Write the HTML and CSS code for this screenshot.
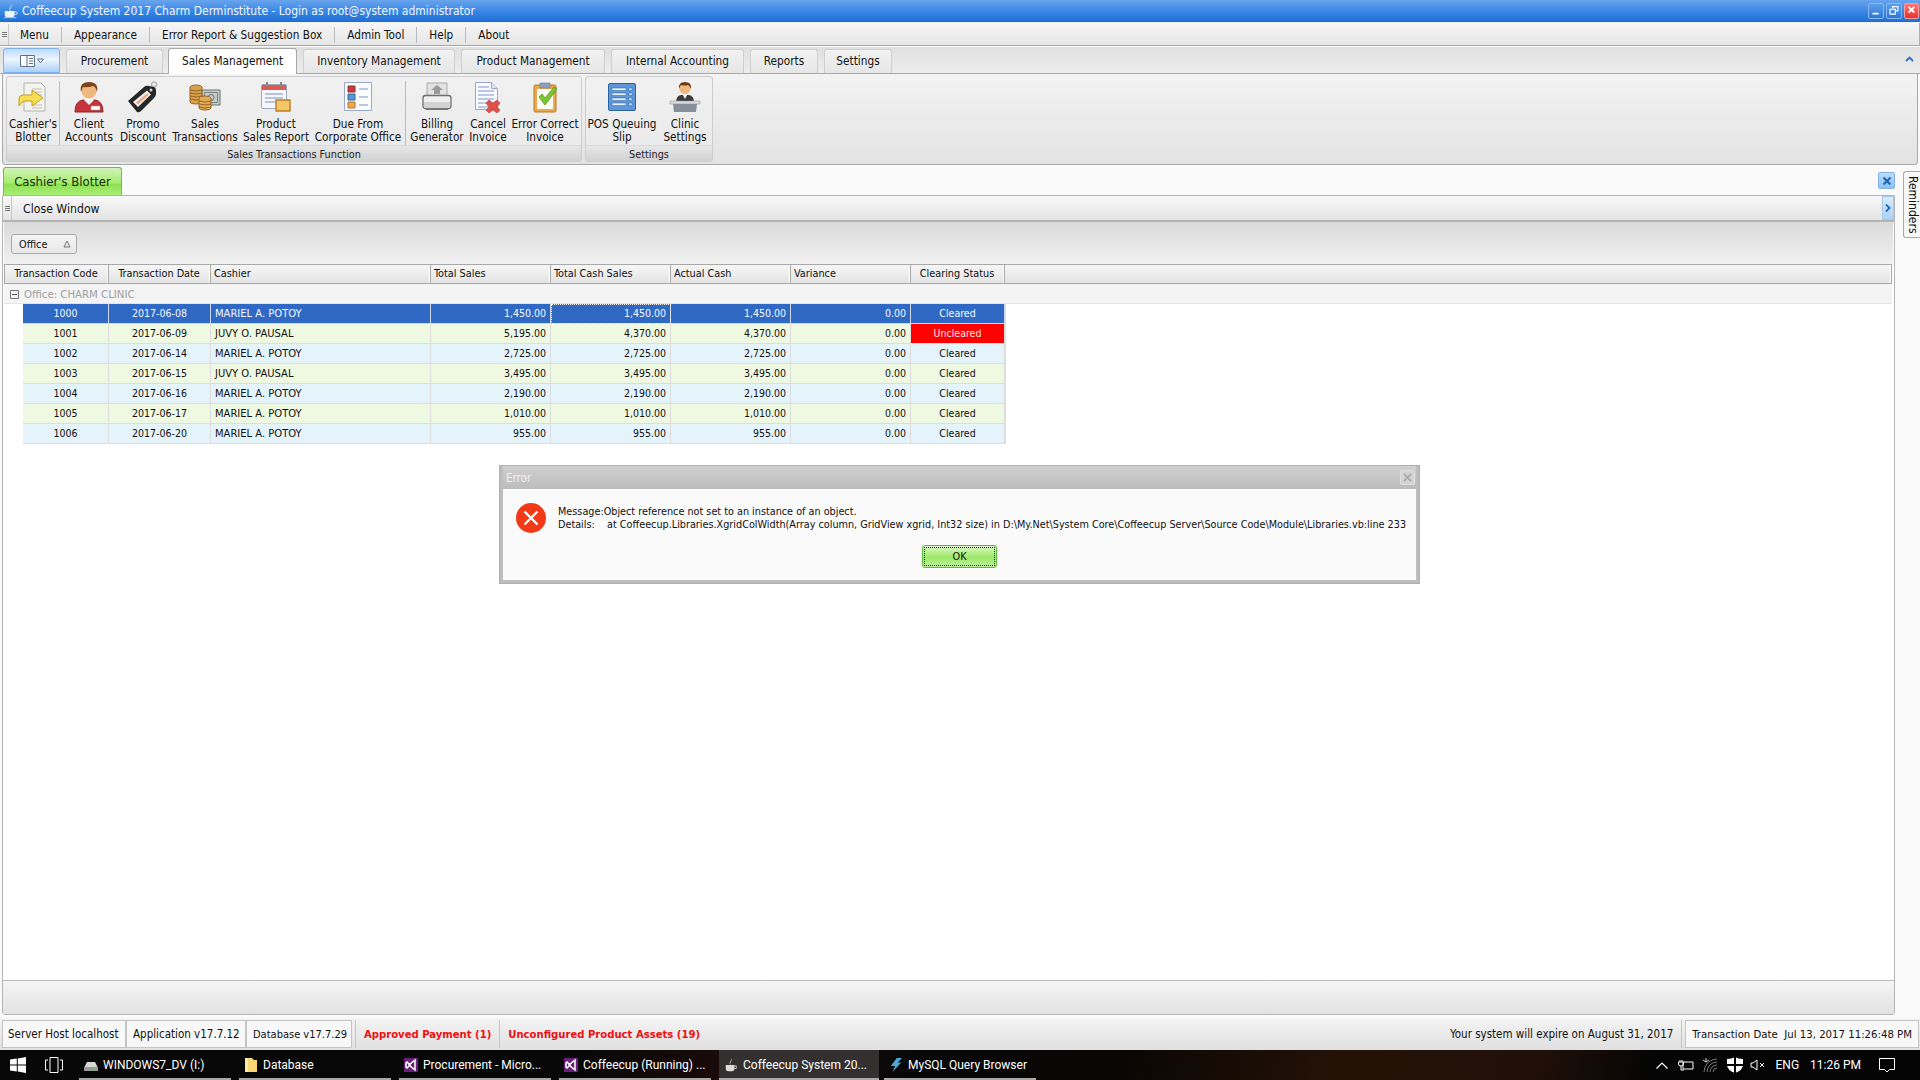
FILE: index.html
```html
<!DOCTYPE html>
<html lang="en">
<head>
    <meta charset="UTF-8">
    <title>Coffeecup System 2017 Charm Derminstitute</title>
    <link rel="stylesheet" href="styles.css">
</head>
<body>
<div class="window">

    <!-- title bar -->
    <div class="titlebar">
        <svg class="title-icon" viewBox="0 0 18 18"><path d="M9 1q2 2 0 4t0 4q-3-2-1-4t1-4z" fill="#dfe9f5"/><path d="M2 9h11v4q0 3-3 3H5q-3 0-3-3z" fill="#eef3fa"/><path d="M13 10h2q1 0 1 1.500T14 13h-1" fill="none" stroke="#eef3fa"/><path d="M1 16.500h14" stroke="#c4d6ee"/></svg>
        <span class="title-text">Coffeecup System 2017 Charm Derminstitute - Login as root@system administrator</span>
        <div class="win-buttons">
            <span class="win-btn"><svg viewBox="0 0 16 15"><path d="M4 10h7v2H4z" fill="#fff"/></svg></span>
            <span class="win-btn"><svg viewBox="0 0 16 15"><path d="M6.500 5V3h6v5H10M3.500 6h6v5.500h-6z" fill="none" stroke="#fff" stroke-width="1.300"/></svg></span>
            <span class="win-btn win-close"><svg viewBox="0 0 16 15"><path d="M4.500 3.500l7 7M11.500 3.500l-7 7" stroke="#fff" stroke-width="2.400"/></svg></span>
        </div>
    </div>

    <!-- menu -->
    <div class="menubar">
        <span class="grip"></span>
        <span class="menu-item">Menu</span>
        <span class="menu-item">Appearance</span>
        <span class="menu-item">Error Report &amp; Suggestion Box</span>
        <span class="menu-item">Admin Tool</span>
        <span class="menu-item">Help</span>
        <span class="menu-item no-sep">About</span>
    </div>

    <!-- ribbon tabs -->
    <div class="tabrow">
        <span class="app-btn">
            <svg viewBox="0 0 26 14"><path d="M1.500 1.500h14v11h-14zM8 1.500v11" fill="#fff" stroke="#5b7186"/><path d="M10 4.500h4M10 7h4M10 9.500h4" stroke="#5b7186"/><path d="M18.500 5h6l-3 4z" fill="#fff" stroke="#5b7186"/></svg>
        </span>
        <span class="tab t-proc">Procurement</span>
        <span class="tab tab-active t-sales">Sales Management</span>
        <span class="tab t-inv">Inventory Management</span>
        <span class="tab t-prod">Product Management</span>
        <span class="tab t-acct">Internal Accounting</span>
        <span class="tab t-rep">Reports</span>
        <span class="tab t-set">Settings</span>
        <svg class="collapse" viewBox="0 0 9 6"><path d="M1 5l3.500-3.500L8 5" fill="none" stroke="#2a72c8" stroke-width="1.800"/></svg>
    </div>

    <!-- ribbon -->
    <div class="ribbon">
        <div class="rb-group">
            <div class="rb-items rb-sales">
                <div class="rb-item">
                    <svg class="ico" viewBox="0 0 32 32"><path d="M7 2h17l4 4v24H7z" fill="#f5f5ef" stroke="#b4b4aa"/><path d="M15 8h10M15 11h10M15 14h10M15 24h10M15 27h10" stroke="#bdbdb2"/><path d="M2 25v-7q0-4 4-4h9v-5l11 8-11 8v-5H8q-3 0-6 5z" fill="#f8de55" stroke="#c49d1e"/></svg>
                    <span>Cashier's<br>Blotter</span>
                </div>
                <i class="rb-sep"></i>
                <div class="rb-item">
                    <svg class="ico" viewBox="0 0 32 32"><path d="M2 31q0-11 8-12h12q8 1 8 12z" fill="#c6353c" stroke="#8e2328"/><path d="M11 19l5 5 5-5-1-3h-8z" fill="#f2f2f2"/><circle cx="16" cy="10" r="7.500" fill="#f0b77e"/><path d="M8 11Q6 1 16 1t8 10q-1-5-4-6-6 2-10 1-1 2-2 5z" fill="#7d4418"/><path d="M18 25h9v4h-9z" fill="#fff" stroke="#999" stroke-width=".6"/></svg>
                    <span>Client<br>Accounts</span>
                </div>
                <div class="rb-item">
                    <svg class="ico" viewBox="0 0 32 32"><circle cx="27" cy="3.500" r="2.500" fill="none" stroke="#b5b5b5" stroke-width="1.400"/><path d="M1 20L17 6q2-2 5-1l5 1q2 1 2 3v4q0 2-2 4L14 30q-2 2-4 1z" fill="#262626"/><path d="M6 21L20 9.500l4 4L11 26z" fill="#eeeeee"/><path d="M9 21.500l11-9 1.500 1.500L11 23.500z" fill="#f2a878"/><circle cx="24" cy="9" r="1.500" fill="#ddd"/></svg>
                    <span>Promo<br>Discount</span>
                </div>
                <div class="rb-item">
                    <svg class="ico" viewBox="0 0 32 32"><path d="M13 9h18v15H13z" fill="#c6cdc8" stroke="#6c746f"/><path d="M15.500 11.500h13v10h-13z" fill="none" stroke="#7b837e"/><circle cx="22" cy="16.500" r="3" fill="none" stroke="#6c746f"/><path d="M1 6q0-2 6-2t6 2v15q0 2-6 2t-6-2z" fill="#d9a04a" stroke="#98672a"/><path d="M1 9q6 2 12 0M1 12q6 2 12 0M1 15q6 2 12 0M1 18q6 2 12 0" fill="none" stroke="#98672a"/><path d="M10 17q0-2 6-2t6 2v10q0 2-6 2t-6-2z" fill="#e2ab55" stroke="#98672a"/><path d="M10 20q6 2 12 0M10 23q6 2 12 0M10 26q6 2 12 0" fill="none" stroke="#98672a"/></svg>
                    <span>Sales<br>Transactions</span>
                </div>
                <div class="rb-item">
                    <svg class="ico" viewBox="0 0 32 32"><rect x="1.500" y="3.500" width="25" height="24" rx="1.500" fill="#f6f7fb" stroke="#9fa9bd"/><path d="M2 4h24v5H2z" fill="#dd5a50"/><path d="M7 1v5M21 1v5" stroke="#888" stroke-width="2"/><path d="M5 12h18v2H5zM5 16h18v2H5zM5 20h11v2H5z" fill="#b8c3d8"/><path d="M16 19h14v11H16z" fill="#f3c768" stroke="#bd7f1e" stroke-width="1.400"/></svg>
                    <span>Product<br>Sales Report</span>
                </div>
                <div class="rb-item">
                    <svg class="ico" viewBox="0 0 32 32"><path d="M2.500 1.500h27v28h-27z" fill="#fbfcff" stroke="#99a9c8"/><path d="M6 5h7v6H6z" fill="#c83c3c" stroke="#933"/><path d="M6 13h7v6H6z" fill="#5b96d6" stroke="#36679f"/><path d="M6 21h7v6H6z" fill="#eda94e" stroke="#b27722"/><path d="M17 8h9M17 16h9M17 24h9" stroke="#7f93bb" stroke-width="1.200"/></svg>
                    <span>Due From<br>Corporate Office</span>
                </div>
                <i class="rb-sep"></i>
                <div class="rb-item">
                    <svg class="ico" viewBox="0 0 32 32"><path d="M6 2h20v15H6z" fill="#e2e2e2" stroke="#aaa"/><path d="M16 4l6 5h-3v4h-6V9h-3z" fill="#9a9a9a"/><rect x="2" y="14.500" width="28" height="13" rx="2.500" fill="#f0f0f0" stroke="#6e6e6e" stroke-width="1.300"/><path d="M3 21h26v6H3z" fill="#d2d2d2"/><path d="M5 28h22" stroke="#777" stroke-width="2"/></svg>
                    <span>Billing<br>Generator</span>
                </div>
                <div class="rb-item">
                    <svg class="ico" viewBox="0 0 32 32"><path d="M3.500 1.500h16l6 6v21h-22z" fill="#f9faff" stroke="#98a8cc"/><path d="M19.500 1.500v6h6" fill="#dde5f5" stroke="#98a8cc"/><path d="M6 6h11M6 10h16M6 14h16M6 18h16M6 22h11M6 26h10" stroke="#7e94c6"/><path d="M17 19l4 3 4-3 3 3-3 4 3 3-3 3-4-3-4 3-3-3 3-3-3-4z" fill="#e0514b" stroke="#b6342f" stroke-width=".6"/></svg>
                    <span>Cancel<br>Invoice</span>
                </div>
                <div class="rb-item">
                    <svg class="ico" viewBox="0 0 32 32"><rect x="5" y="4" width="22" height="27" rx="1.500" fill="#eda84e" stroke="#b67722"/><path d="M8 8h16v20H8z" fill="#fdfdf8"/><path d="M11 2h10v5H11z" fill="#8da1be" stroke="#64789a" stroke-width=".6"/><path d="M10 16l3-3 3 4 9-11 3 2-12 16z" fill="#7cc62e" stroke="#4f8a17" stroke-width=".7"/></svg>
                    <span>Error Correct<br>Invoice</span>
                </div>
            </div>
            <div class="rb-caption">Sales Transactions Function</div>
        </div>
        <div class="rb-group">
            <div class="rb-items rb-settings">
                <div class="rb-item">
                    <svg class="ico" viewBox="0 0 32 32"><rect x="2.500" y="2.500" width="27" height="27" rx="1.500" fill="#5c97d8" stroke="#2d63a5"/><path d="M6 7h14v2.500H6zM6 12h14v2.500H6zM6 17h14v2.500H6zM6 22h14v2.500H6z" fill="#e8f0fb" stroke="#2d63a5" stroke-width=".5"/><path d="M23 7h3v2.500h-3zM23 12h3v2.500h-3zM23 17h3v2.500h-3zM23 22h3v2.500h-3z" fill="#dce9f8" stroke="#2d63a5" stroke-width=".5"/></svg>
                    <span>POS Queuing<br>Slip</span>
                </div>
                <div class="rb-item">
                    <svg class="ico" viewBox="0 0 32 32"><path d="M7 21q0-6 5-7h8q5 1 5 7z" fill="#3c3c40"/><path d="M14 14l2 4 2-4z" fill="#fff"/><circle cx="16" cy="7.500" r="5.500" fill="#efb87e"/><path d="M10 8Q9 1 16 1t6 7q-1-3-3-4-4 1-7 0-1 1-2 4z" fill="#6f3d14"/><path d="M1 20h30v3H1z" fill="#dcdcdc" stroke="#999" stroke-width=".6"/><path d="M4 23h24l-1 8H5z" fill="#85909c"/></svg>
                    <span>Clinic<br>Settings</span>
                </div>
            </div>
            <div class="rb-caption">Settings</div>
        </div>
    </div>

    <!-- document area -->
    <div class="doc-area">
        <div class="doc-main">
            <div class="doc-tabs">
                <span class="doc-tab">Cashier's Blotter</span>
                <span class="doc-close"><svg viewBox="0 0 10 10"><path d="M1.500 1.500l7 7M8.500 1.500l-7 7" stroke="#1f66b8" stroke-width="2.200"/></svg></span>
            </div>
            <div class="panel">
                <div class="toolbar">
                    <span class="grip"></span>
                    <span class="toolbar-item">Close Window</span>
                    <span class="toolbar-more"><svg viewBox="0 0 6 8"><path d="M1 .5L4.500 4 1 7.500" fill="none" stroke="#1f66b8" stroke-width="1.800"/></svg></span>
                </div>
                <div class="group-panel">
                    <span class="group-chip">Office<svg viewBox="0 0 8 8"><path d="M4 1l3 6H1z" fill="none" stroke="#777"/></svg></span>
                </div>
                <div class="grid">
                    <div class="grid-head">
                        <span class="center">Transaction Code</span>
                        <span class="center">Transaction Date</span>
                        <span>Cashier</span>
                        <span>Total Sales</span>
                        <span>Total Cash Sales</span>
                        <span>Actual Cash</span>
                        <span>Variance</span>
                        <span class="center">Clearing Status</span>
                        <span></span>
                    </div>
                    <div class="grid-group">
                        <svg viewBox="0 0 9 9"><path d="M.5.500h8v8h-8z" fill="#f4f4f4" stroke="#777"/><path d="M2 4.500h5" stroke="#555"/></svg>
                        Office: CHARM CLINIC
                    </div>
                    <div class="grid-row row-selected">
                        <span class="center">1000</span><span class="center">2017-06-08</span><span class="name">MARIEL A. POTOY</span><span class="num">1,450.00</span><span class="num cell-focus">1,450.00</span><span class="num">1,450.00</span><span class="num">0.00</span><span class="center">Cleared</span>
                    </div>
                    <div class="grid-row row-green">
                        <span class="center">1001</span><span class="center">2017-06-09</span><span class="name">JUVY O. PAUSAL</span><span class="num">5,195.00</span><span class="num">4,370.00</span><span class="num">4,370.00</span><span class="num">0.00</span><span class="center cell-red">Uncleared</span>
                    </div>
                    <div class="grid-row row-blue">
                        <span class="center">1002</span><span class="center">2017-06-14</span><span class="name">MARIEL A. POTOY</span><span class="num">2,725.00</span><span class="num">2,725.00</span><span class="num">2,725.00</span><span class="num">0.00</span><span class="center">Cleared</span>
                    </div>
                    <div class="grid-row row-green">
                        <span class="center">1003</span><span class="center">2017-06-15</span><span class="name">JUVY O. PAUSAL</span><span class="num">3,495.00</span><span class="num">3,495.00</span><span class="num">3,495.00</span><span class="num">0.00</span><span class="center">Cleared</span>
                    </div>
                    <div class="grid-row row-blue">
                        <span class="center">1004</span><span class="center">2017-06-16</span><span class="name">MARIEL A. POTOY</span><span class="num">2,190.00</span><span class="num">2,190.00</span><span class="num">2,190.00</span><span class="num">0.00</span><span class="center">Cleared</span>
                    </div>
                    <div class="grid-row row-green">
                        <span class="center">1005</span><span class="center">2017-06-17</span><span class="name">MARIEL A. POTOY</span><span class="num">1,010.00</span><span class="num">1,010.00</span><span class="num">1,010.00</span><span class="num">0.00</span><span class="center">Cleared</span>
                    </div>
                    <div class="grid-row row-blue">
                        <span class="center">1006</span><span class="center">2017-06-20</span><span class="name">MARIEL A. POTOY</span><span class="num">955.00</span><span class="num">955.00</span><span class="num">955.00</span><span class="num">0.00</span><span class="center">Cleared</span>
                    </div>
                </div>
                <div class="panel-foot"></div>
            </div>
        </div>
        <div class="side-tabs">
            <span class="side-tab">Reminders</span>
        </div>
    </div>

    <!-- status bar -->
    <div class="statusbar">
        <span class="st-cell st-host">Server Host localhost</span>
        <span class="st-cell st-app">Application v17.7.12</span>
        <span class="st-cell st-db">Database v17.7.29</span>
        <span class="st-alert">Approved Payment (1)</span>
        <span class="st-alert">Unconfigured Product Assets (19)</span>
        <span class="st-expire">Your system will expire on August 31, 2017</span>
        <span class="st-cell st-date">Transaction Date&nbsp; Jul 13, 2017 11:26:48 PM</span>
    </div>

    <!-- windows taskbar -->
    <div class="taskbar">
        <svg class="start" viewBox="0 0 16 16"><path d="M0 2.500L6.800 1.500v6H0zM7.800 1.400L16 0v7.500H7.800zM0 8.500h6.800v6L0 13.500zM7.800 8.500H16V16l-8.200-1.400z" fill="#fff"/></svg>
        <svg class="taskview" viewBox="0 0 18 16"><path d="M5 .5h8v15H5zM3 3H.5v10H3M15 3h2.500v10H15" fill="none" stroke="#fff"/></svg>
        <span class="task">
            <svg viewBox="0 0 14 14"><path d="M3 4h8l3 6H0z" fill="#d8d8d8"/><path d="M0 9h14v4H0z" fill="#9a9a9a"/><path d="M10 10.500h2" stroke="#5be05b"/></svg>WINDOWS7_DV (I:)
        </span>
        <span class="task">
            <svg viewBox="0 0 14 14"><path d="M1 0h7l2 2h3v12H1z" fill="#f7d874"/><path d="M1 0h3v14H1z" fill="#fbe9a8"/></svg>Database
        </span>
        <span class="task">
            <svg viewBox="0 0 14 14"><path d="M0 0h14v14H0z" fill="#68217a"/><path d="M3 4l3 3-3 3-1-1V5zM11 2v10L5 7z" fill="none" stroke="#fff" stroke-width="1.500"/></svg>Procurement - Micro...
        </span>
        <span class="task">
            <svg viewBox="0 0 14 14"><path d="M0 0h14v14H0z" fill="#68217a"/><path d="M3 4l3 3-3 3-1-1V5zM11 2v10L5 7z" fill="none" stroke="#fff" stroke-width="1.500"/></svg>Coffeecup (Running) ...
        </span>
        <span class="task task-active">
            <svg viewBox="0 0 14 16"><path d="M7 0q2 2 0 4t0 4q-3-2-1-4t1-4z" fill="#bbb"/><path d="M1 8h10v4q0 3-3 3H4q-3 0-3-3z" fill="#ddd"/><path d="M11 9h2v3h-2" fill="none" stroke="#ddd"/></svg>Coffeecup System 20...
        </span>
        <span class="task">
            <svg viewBox="0 0 14 16"><path d="M8 0h6L9 5h4L3 16l3-7H1z" fill="#4ca8d8"/></svg>MySQL Query Browser
        </span>
        <div class="tray">
            <svg class="tray-caret" viewBox="0 0 12 7"><path d="M.5 6.500L6 1l5.500 5.500" fill="none" stroke="#fff" stroke-width="1.200"/></svg>
            <svg class="tray-power" viewBox="0 0 16 12"><path d="M5 3h10v7H5zM2 1v2M4 1v2M0.500 3h5v2q0 2-2.500 2T.5 5zM3 7v4h3" fill="none" stroke="#fff"/></svg>
            <svg class="tray-wifi" viewBox="0 0 16 16"><path d="M2 15A13 13 0 0 1 15 2M5 15a10 10 0 0 1 10-10M8 15a7 7 0 0 1 7-7M11 15a4 4 0 0 1 4-4" fill="none" stroke="#777"/><path d="M1 3l3 2M4 1v4M7 3L4 5" stroke="#fff" stroke-width=".8"/></svg>
            <svg class="tray-shield" viewBox="0 0 16 16"><path d="M8 0q3 2 8 2v6q0 5-8 8-8-3-8-8V2q5 0 8-2z" fill="#fff"/><path d="M7 0h2v16H7zM0 7h16v2H0z" fill="#050505"/></svg>
            <svg class="tray-vol" viewBox="0 0 16 14"><path d="M1 5h2l4-3v10l-4-3H1z" fill="none" stroke="#fff"/><path d="M10 5l4 4M14 5l-4 4" stroke="#fff"/></svg>
            <span class="tray-text tray-lang">ENG</span>
            <span class="tray-text tray-time">11:26 PM</span>
            <svg class="tray-note" viewBox="0 0 16 16"><path d="M.5 1.500h15v11h-5l-2.500 2.500-2.500-2.500h-5z" fill="none" stroke="#fff"/></svg>
        </div>
    </div>

    <!-- error dialog over the page -->
    <div class="dialog">
        <div class="dialog-title">
            <span>Error</span>
            <span class="dialog-x"><svg viewBox="0 0 10 10"><path d="M1 1l8 8M9 1l-8 8" stroke="#aaa" stroke-width="2"/></svg></span>
        </div>
        <div class="dialog-body">
            <div class="dialog-msg">
                <svg class="err-icon" viewBox="0 0 30 30"><circle cx="15" cy="15" r="15" fill="#f23a17"/><path d="M8.500 8.500l13 13M21.500 8.500l-13 13" stroke="#fff" stroke-width="2.400"/></svg>
                <p>Message:Object reference not set to an instance of an object.<br>Details:&nbsp;&nbsp;&nbsp; at Coffeecup.Libraries.XgridColWidth(Array column, GridView xgrid, Int32 size) in D:\My.Net\System Core\Coffeecup Server\Source Code\Module\Libraries.vb:line 233</p>
            </div>
            <button class="ok-btn">OK</button>
        </div>
    </div>
</div>
</body>
</html>
```

FILE: styles.css
```css
* { box-sizing: border-box; }
html, body { margin: 0; height: 100%; }
body {
    font-family: "DejaVu Sans Condensed", "DejaVu Sans", sans-serif;
    font-stretch: condensed;
    font-size: 10.8px;
    color: #111;
    background: #fafafa;
    overflow: hidden;
}
svg { display: block; flex: none; }

.window {
    position: relative;
    width: 1920px;
    height: 1080px;
    display: flex;
    flex-direction: column;
    overflow: hidden;
}

/* title bar */
.titlebar {
    height: 23px;
    flex: none;
    display: flex;
    align-items: center;
    padding-left: 3px;
    background: linear-gradient(#6aa5ec, #3f8ae6 45%, #1c6dd4);
    border-bottom: 1px solid #f0f0f0;
    color: #f2f6fc;
    font-size: 12px;
}
.title-icon { width: 16px; height: 16px; margin-right: 3px; }
.win-buttons { margin-left: auto; display: flex; gap: 2px; padding-right: 1px; }
.win-btn {
    width: 16px;
    height: 16px;
    border: 1px solid #8ab8ee;
    border-radius: 2px;
    background: linear-gradient(#5f9fe8, #2c78d8);
}
.win-close { background: linear-gradient(#f77, #e8322c); border-color: #f3a0a0; width: 15px; }

/* menu */
.menubar {
    height: 23px;
    flex: none;
    display: flex;
    align-items: center;
    padding-top: 1px;
    font-size: 11.7px;
    background: linear-gradient(#f6f6f6, #e6e6e6);
    border-bottom: 1px solid #a8a8a8;
    border-right: 1px solid #b0b0b0;
}
.grip {
    width: 9px;
    height: 100%;
    flex: none;
    background: repeating-linear-gradient(#777 0 1px, transparent 1px 2px) 2px 8px / 5px 5px no-repeat;
    border-right: 1px solid #c8c8c8;
}
.menu-item {
    padding: 0 12px;
    line-height: 16px;
    border-right: 1px solid #bbb;
}
.menubar .grip + .menu-item { padding-left: 11px; }
.menu-item.no-sep { border-right: 0; }

/* ribbon tabs */
.tabrow {
    height: 28px;
    flex: none;
    display: flex;
    align-items: flex-end;
    padding: 0 0 0 3px;
    background: linear-gradient(#e0e0e0, #ededed);
    border-top: 1px solid #fafafa;
    border-bottom: 1px solid #a8a8a8;
}
.app-btn {
    width: 57px;
    height: 25px;
    margin-right: 6px;
    display: flex;
    align-items: center;
    justify-content: center;
    background: linear-gradient(#b9dafc, #eef6ff 45%, #a9d0fa);
    border: 1px solid #7fb2e8;
    border-radius: 3px 3px 0 0;
}
.app-btn svg { width: 26px; height: 14px; }
.tab {
    height: 24px;
    margin-right: 6px;
    display: flex;
    align-items: center;
    justify-content: center;
    padding-bottom: 1px;
    background: linear-gradient(#f2f2f2, #e6e6e6);
    border: 1px solid #cfcfcf;
    border-bottom: 0;
    border-radius: 3px 3px 0 0;
    font-size: 11.75px;
}
.tab-active {
    height: 26px;
    margin-bottom: -1px;
    padding-bottom: 2px;
    background: #fff;
    border-color: #a8a8a8;
}
.t-proc { width: 97px; margin-right: 5px; }
.t-sales { width: 129px; }
.t-inv { width: 152px; }
.t-prod { width: 144px; }
.t-acct { width: 133px; }
.t-rep { width: 68px; }
.t-set { width: 68px; }
.collapse { width: 9px; height: 6px; margin: 0 6px 11px auto; }

/* ribbon */
.ribbon {
    height: 91px;
    flex: none;
    margin: 0 2px;
    padding: 2px 3px;
    display: flex;
    gap: 3px;
    background: linear-gradient(#f3f3f3, #e3e3e3);
    border: 1px solid #a8a8a8;
    border-top: 0;
    border-radius: 0 0 4px 4px;
}
.rb-group {
    display: flex;
    flex-direction: column;
    border: 1px solid #cdcdcd;
    border-radius: 3px;
    background: linear-gradient(#f1f1f1, #e9e9e9);
}
.rb-items { flex: 1; display: grid; padding-top: 4px; }
.rb-sales { grid-template-columns: 52px 2px 56px 52px 72px 70px 94px 2px 60px 42px 72px; }
.rb-settings { grid-template-columns: 72px 54px; }
.rb-item {
    display: flex;
    flex-direction: column;
    align-items: center;
    text-align: center;
    font-size: 11.7px;
    line-height: 13px;
    white-space: nowrap;
}
.rb-item .ico { width: 32px; height: 32px; margin-bottom: 5px; }
.rb-sep { width: 1px; height: 64px; background: #bcbcbc; }
.rb-caption {
    height: 16px;
    flex: none;
    text-align: center;
    line-height: 17px;
    color: #222;
    background: linear-gradient(#e6e6e6, #d2d2d2);
    border-top: 1px solid #d8d8d8;
}

/* document area */
.doc-area { flex: 1; min-height: 0; display: flex; }
.doc-main { width: 1896px; padding-left: 2px; display: flex; flex-direction: column; }
.doc-tabs {
    height: 30px;
    flex: none;
    display: flex;
    align-items: flex-end;
    justify-content: space-between;
    padding-left: 1px;
}
.doc-tab {
    width: 119px;
    height: 28px;
    display: flex;
    align-items: center;
    justify-content: center;
    font-size: 13px;
    color: #1c2a10;
    background: linear-gradient(#d4f3bc, #a5ed70 55%, #8fe050 60%, #a8ee78);
    border: 1px solid #6dbd4a;
    border-bottom: 0;
    border-radius: 3px 3px 0 0;
}
.doc-close {
    width: 17px;
    height: 17px;
    margin: 0 0 6px 0;
    display: flex;
    align-items: center;
    justify-content: center;
    background: linear-gradient(#bddcfb, #8fc2f5);
    border: 1px solid #7fb2e8;
    border-radius: 2px;
}
.doc-close svg { width: 10px; height: 10px; }
.panel {
    flex: 1;
    min-height: 0;
    display: flex;
    flex-direction: column;
    background: #fff;
    border: 1px solid #b4b4b4;
    border-radius: 0 0 3px 3px;
}
.toolbar {
    height: 26px;
    flex: none;
    display: flex;
    align-items: center;
    background: linear-gradient(#f8f8f8, #e4e4e4);
    border-bottom: 2px solid #b4b4b4;
}
.toolbar-item { padding: 1px 0 0 11px; font-size: 12.2px; }
.toolbar .grip { background-position: 2px 10px; }
.toolbar-more {
    width: 12px;
    height: 24px;
    margin-left: auto;
    display: flex;
    align-items: center;
    justify-content: center;
    background: linear-gradient(#d8ebfd, #a8d2fa);
    border: 1px solid #a6c8ec;
}
.toolbar-more svg { width: 6px; height: 8px; }
.group-panel {
    height: 42px;
    flex: none;
    padding: 12px 0 0 7px;
    margin: 0 1px;
    background: linear-gradient(#dadada, #f1f1f1);
}
.group-chip {
    width: 66px;
    height: 20px;
    display: flex;
    align-items: center;
    justify-content: space-between;
    padding: 0 5px 0 7px;
    background: linear-gradient(#f4f4f4, #e8e8e8);
    border: 1px solid #aaa;
    border-radius: 3px;
}
.group-chip svg { width: 8px; height: 8px; }

/* grid */
.grid { margin: 0 2px 0 1px; flex: 1; min-height: 0; }
.grid-head {
    height: 20px;
    display: grid;
    grid-template-columns: 104px 102px 220px 120px 120px 120px 120px 94px 1fr;
    border: 1px solid #a8a8a8;
    border-width: 1px 1px 1px 0;
    background: linear-gradient(#f6f6f6, #e4e4e4);
}
.grid-head span {
    padding: 0 3px;
    line-height: 17px;
    white-space: nowrap;
    border-left: 1px solid #a8a8a8;
    border-right: 1px solid #fff;
}
.grid-group {
    height: 20px;
    display: flex;
    align-items: center;
    gap: 5px;
    padding: 1px 0 0 6px;
    font-size: 11.3px;
    color: #a0a0a0;
    background: #f4f4f4;
    border-bottom: 1px solid #e4e4e4;
}
.grid-group svg { width: 9px; height: 9px; }
.grid-row {
    width: 983px;
    height: 20px;
    margin-left: 19px;
    display: grid;
    grid-template-columns: 86px 102px 220px 120px 120px 120px 120px 94px;
    border-right: 1px solid #ddd;
    font-size: 10.5px;
}
.grid-row span {
    padding: 0 4px;
    line-height: 19px;
    white-space: nowrap;
    border-right: 1px solid #ddd;
    border-bottom: 1px solid #ddd;
}
.grid-row .name { font-size: 11.1px; }
.center { text-align: center; }
.num { text-align: right; }
.row-green { background: #eff8e0; }
.row-blue { background: #e5f3fa; }
.row-selected { background: #3069c4; color: #f4f7fc; }
.row-selected span { border-color: #cfd8ea; }
.grid-row .cell-focus { outline: 1px dotted #fff; outline-offset: -1px; }
.grid-row .cell-red { background: #fe0000; color: #fbe8e8; }
.panel-foot {
    height: 34px;
    flex: none;
    background: linear-gradient(#f5f5f5, #e2e2e2);
    border-top: 1px solid #bbb;
}

/* right side tab */
.side-tabs { flex: 1; padding: 6px 0 0 8px; }
.side-tab {
    display: block;
    width: 17px;
    height: 67px;
    padding-left: 1px;
    writing-mode: vertical-rl;
    text-align: center;
    font-size: 12px;
    line-height: 15px;
    background: #f8f8f8;
    border: 1px solid #aaa;
    border-right: 0;
    border-radius: 3px 0 0 3px;
}

/* status bar */
.statusbar {
    height: 32px;
    flex: none;
    margin-top: 3px;
    display: flex;
    align-items: center;
    padding: 0 1px 0 2px;
    background: linear-gradient(#f4f4f4, #e0e0e0);
    font-size: 11.5px;
}
.st-cell {
    height: 28px;
    padding: 0 5px;
    line-height: 27px;
    white-space: nowrap;
    background: #f8f8f8;
    border: 1px solid #c4c4c4;
}
.st-host { width: 124px; }
.st-app { width: 120px; padding-left: 6px; }
.st-db { width: 106px; padding-left: 6px; font-size: 11px; }
.st-alert {
    height: 28px;
    margin-left: 3px;
    padding: 0 8px;
    border-left: 1px solid #c4c4c4;
    line-height: 29px;
    font-size: 11.2px;
    color: #ee1010;
    font-weight: bold;
    white-space: nowrap;
}
.st-alert + .st-alert { margin-left: 0; }
.st-expire { margin-left: auto; padding-right: 8px; height: 28px; line-height: 29px; border-right: 1px solid #c4c4c4; margin-right: 3px; }
.st-date { padding: 0 6px; font-size: 11.3px; }

/* taskbar */
.taskbar {
    height: 30px;
    flex: none;
    display: flex;
    align-items: stretch;
    color: #fff;
    font-family: Roboto, "Noto Sans", sans-serif;
    font-stretch: normal;
    font-size: 12px;
    background: linear-gradient(100deg, #080808 0 30%, #1a0b08 38%, #080808 48%, #0a0604 58%, #241206 70%, #201008 80%, #050505 86%);
}
.start { width: 16px; height: 16px; margin: 7px 19px 0 10px; }
.taskview { width: 18px; height: 16px; margin: 7px 16px 0 0; }
.task {
    width: 152px;
    margin-right: 8px;
    display: flex;
    align-items: center;
    gap: 5px;
    padding: 1px 0 0 5px;
    white-space: nowrap;
    border-bottom: 2px solid #a8a8a8;
}
.task svg { width: 14px; height: 14px; }
.task-active { width: 160px; margin-right: 5px; background: #33302f; }
.task:last-of-type { margin-right: 0; }
.tray { flex: 1; display: flex; align-items: center; justify-content: flex-end; padding-right: 25px; }
.tray-caret { width: 12px; height: 7px; margin-right: 10px; }
.tray-power { width: 16px; height: 12px; margin-right: 8px; }
.tray-wifi { width: 16px; height: 16px; margin-right: 9px; }
.tray-shield { width: 16px; height: 16px; margin-right: 7px; }
.tray-vol { width: 16px; height: 14px; margin-right: 10px; }
.tray-lang { margin-right: 11px; }
.tray-time { margin-right: 18px; }
.tray-note { width: 16px; height: 16px; }

/* error dialog */
.dialog {
    position: absolute;
    left: 499px;
    top: 465px;
    width: 921px;
    height: 119px;
    display: flex;
    flex-direction: column;
    background: #bdbdbd;
    border: 1px solid #b0b0b0;
    padding: 0 3px 3px;
}
.dialog-title {
    height: 23px;
    flex: none;
    display: flex;
    align-items: center;
    justify-content: space-between;
    padding: 0 1px 0 3px;
    color: #f0f0f0;
    background: linear-gradient(#d0d0d0, #bcbcbc);
    font-size: 11.5px;
}
.dialog-x {
    width: 15px;
    height: 15px;
    display: flex;
    align-items: center;
    justify-content: center;
    background: #d4d4d4;
    border: 1px solid #e0e0e0;
    border-radius: 2px;
}
.dialog-x svg { width: 9px; height: 9px; }
.dialog-body {
    flex: 1;
    display: flex;
    flex-direction: column;
    background: #fafafa;
    padding: 14px 0 0 13px;
}
.dialog-msg { display: flex; gap: 12px; font-size: 10.75px; }
.err-icon { width: 30px; height: 30px; }
.dialog-msg p { margin: 2px 0 0; line-height: 13px; white-space: nowrap; }
.ok-btn {
    width: 75px;
    height: 23px;
    margin: 12px 0 0 406px;
    padding: 0;
    font: inherit;
    color: #111;
    background: linear-gradient(#ddf7c8, #9be866 55%, #c3f2a2);
    border: 1px solid #5cb83c;
    border-radius: 3px;
    outline: 1px dotted #222;
    outline-offset: -3px;
}
```
